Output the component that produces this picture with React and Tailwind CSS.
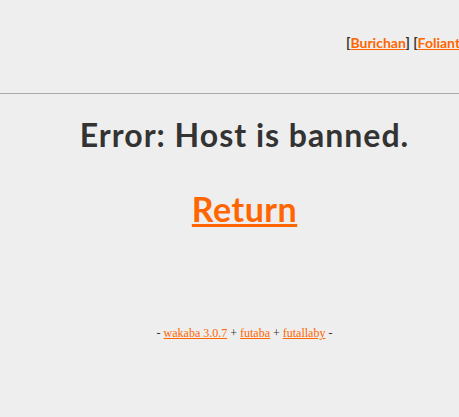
import React from "react";

const App = () => {
  return (
    <div className="h-[417px] w-[459px] overflow-hidden bg-[#eeeeee] text-[#333333] [font-family:Lato,'DejaVu_Sans',sans-serif]">
      <div className="w-[489px]">
        <div className="flex h-[93px] items-start pl-[346px] pt-[32px] whitespace-nowrap text-[14px] font-bold">
          <span>
            [<a href="#" className="text-[#ff6600] underline">Burichan</a>]{" "}
            [<a href="#" className="text-[#ff6600] underline">Foliant</a>]
          </span>
        </div>
        <div className="h-px w-[459px] bg-[#aaaaaa]" />
        <h1 className="mt-[21px] text-center text-[32px] font-bold leading-[40px] tracking-[1px]">
          Error: Host is banned.
        </h1>
        <div className="mt-[32px] text-center text-[34px] font-bold leading-[44px] tracking-[0.5px]">
          <a href="#" className="text-[#ff6600] underline">Return</a>
        </div>
        <div className="mt-[93px] text-center text-[12px] [font-family:'Liberation_Serif',serif]">
          - <a href="#" className="text-[#ff6600] underline">wakaba 3.0.7</a> +{" "}
          <a href="#" className="text-[#ff6600] underline">futaba</a> +{" "}
          <a href="#" className="text-[#ff6600] underline">futallaby</a> -
        </div>
      </div>
    </div>
  );
};

export default App;
